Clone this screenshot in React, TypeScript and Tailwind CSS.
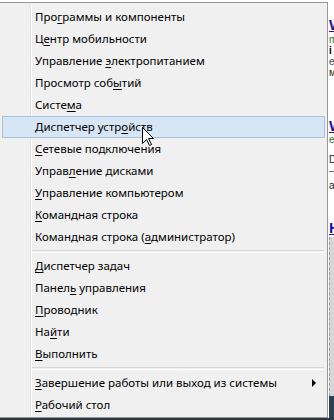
import React from 'react';

type Item = { pre: string; key: string; post: string; sub?: boolean };

const GROUPS: Item[][] = [
  [
    { pre: 'Про', key: 'г', post: 'раммы и компоненты' },
    { pre: 'Ц', key: 'е', post: 'нтр мобильности' },
    { pre: 'Управление ', key: 'э', post: 'лектропитанием' },
    { pre: 'Просмотр соб', key: 'ы', post: 'тий' },
    { pre: 'Систе', key: 'м', post: 'а' },
    { pre: 'Диспетчер устр', key: 'о', post: 'йств' },
    { pre: '', key: 'С', post: 'етевые подключения' },
    { pre: 'Управ', key: 'л', post: 'ение дисками' },
    { pre: '', key: 'У', post: 'правление компьютером' },
    { pre: '', key: 'К', post: 'омандная строка' },
    { pre: 'Командная строка (', key: 'а', post: 'дминистратор)' },
  ],
  [
    { pre: '', key: 'Д', post: 'испетчер задач' },
    { pre: 'Панел', key: 'ь', post: ' управления' },
    { pre: '', key: 'П', post: 'роводник' },
    { pre: 'На', key: 'й', post: 'ти' },
    { pre: '', key: 'В', post: 'ыполнить' },
  ],
  [
    { pre: '', key: 'З', post: 'авершение работы или выход из системы', sub: true },
    { pre: '', key: 'Р', post: 'абочий стол' },
  ],
];

const HOVERED = 'Диспетчер устр';

function Cursor() {
  return (
    <svg width="12" height="19" viewBox="0 0 12 19" className="absolute left-[139px] top-[10px]">
      <path
        d="M0.5 0.5 L0.5 16.5 L4.5 12.5 L7.5 18.5 L9.5 17.5 L6.5 11.5 L11.5 11.5 Z"
        fill="#fff"
        stroke="#000"
        strokeWidth="1"
        strokeLinejoin="miter"
      />
    </svg>
  );
}

function MenuRow({ item }: { item: Item }) {
  const hovered = item.pre === HOVERED;
  return (
    <div
      className={
        hovered
          ? 'relative flex h-[22px] items-center border border-[#a7c2df] bg-[#d7e6f5] pl-[32px]'
          : 'relative flex h-[22px] items-center border border-transparent pl-[32px]'
      }
    >
      <span className="whitespace-nowrap">
        {item.pre}
        <span className="underline underline-offset-2">{item.key}</span>
        {item.post}
      </span>
      {item.sub && (
        <span className="ml-auto mr-[8px] h-0 w-0 border-y-[4px] border-l-[4px] border-y-transparent border-l-black" />
      )}
      {hovered && <Cursor />}
    </div>
  );
}

function PageStrip() {
  return (
    <div className="flex flex-1 flex-col overflow-hidden bg-white pl-[1px] text-[10px] leading-[10px] font-['Liberation_Sans',sans-serif]">
      <div className="mt-[17px] h-[15px] font-bold text-[15px] leading-[15px] text-[#1a0dab] underline">W</div>
      <div className="mt-[3px] h-[10px] text-[#1e7b2e]">m</div>
      <div className="mt-[1px] h-[10px] font-bold">i</div>
      <div className="mt-[1px] h-[10px] text-[#444]">е</div>
      <div className="mt-[1px] h-[10px] text-[#222]">м</div>
      <div className="mt-[40px] h-[15px] font-bold text-[15px] leading-[15px] text-[#1a0dab] underline">W</div>
      <div className="mt-[2px] h-[10px] text-[#1e7b2e]">е</div>
      <div className="mt-[10px] h-[10px] text-[#222]">D</div>
      <div className="mt-[6px] h-[1px] border-t border-dashed border-[#777]" />
      <div className="mt-[9px] h-[10px] text-[#222]">a</div>
      <div className="mt-[29px] h-[15px] font-bold text-[15px] leading-[15px] text-[#1a0dab] underline">Н</div>
      <div className="mt-[2px] flex-1 border-l border-dashed border-[#9a9a9a] bg-[#d4d6d8]" />
      <div className="h-[22px] bg-[#2a4256]" />
    </div>
  );
}

export default function App() {
  return (
    <div className="flex h-[420px] w-[334px] flex-col overflow-hidden bg-white font-['Noto_Sans',sans-serif] text-[11.5px] text-black">
      <div className="flex flex-1">
        <div className="mt-[2px] w-[328px] self-start border-y border-r border-[#979797] bg-[linear-gradient(to_right,#f0f0f0_30px,#e2e3e3_30px,#e2e3e3_31px,#ffffff_31px,#ffffff_32px,#f0f0f0_32px)] px-[2px] pt-[3px] pb-[1px]">
          {GROUPS.map((group, gi) => (
            <div key={gi}>
              {gi > 0 && (
                <div className="my-[2px] ml-[30px] mr-[1px] h-[3px] border-t border-b border-t-[#d7d7d7] border-b-white" />
              )}
              {group.map((item) => (
                <MenuRow key={item.pre + item.key} item={item} />
              ))}
            </div>
          ))}
        </div>
        <PageStrip />
      </div>
      <div className="h-[2px] bg-[#2b3640]" />
    </div>
  );
}
